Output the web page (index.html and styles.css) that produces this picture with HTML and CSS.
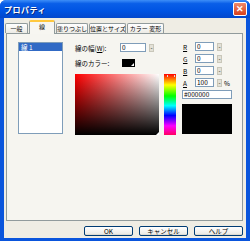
FILE: index.html
```html
<!DOCTYPE html>
<html lang="ja">
<head>
    <meta charset="UTF-8">
    <title>プロパティ</title>
    <link rel="stylesheet" href="styles.css">
</head>
<body>

<div class="window">
    <div class="titlebar">
        <span class="title">プロパティ</span>
        <span class="close">✕</span>
    </div>

    <div class="client">
        <div class="tabs">
            <div class="tab t1">一般</div>
            <div class="tab t2 active">線</div>
            <div class="tab t3">塗りつぶし</div>
            <div class="tab t4">位置とサイズ</div>
            <div class="tab t5">カラー 変形</div>
        </div>

        <div class="panel">
            <div class="list">
                <div class="item selected">線 1</div>
            </div>

            <div class="mid">
                <div class="row first">
                    <span class="label">線の幅(<u>W</u>):</span>
                    <span class="field wide">0</span>
                    <span class="spin">-</span>
                </div>
                <div class="row second">
                    <span class="label">線のカラー:</span>
                    <span class="swatch"><span class="arrow"></span></span>
                </div>
                <div class="picker">
                    <div class="sv"><span class="corner"></span></div>
                    <div class="hue"><span class="marker"></span></div>
                </div>
            </div>

            <div class="right">
                <div class="chan"><span class="key"><u>R</u></span><span class="field">0</span><span class="spin">-</span></div>
                <div class="chan"><span class="key"><u>G</u></span><span class="field">0</span><span class="spin">-</span></div>
                <div class="chan"><span class="key"><u>B</u></span><span class="field">0</span><span class="spin">-</span></div>
                <div class="chan"><span class="key"><u>A</u></span><span class="field">100</span><span class="spin">-</span><span class="pct">%</span></div>
                <div class="hex">#000000</div>
                <div class="preview"></div>
            </div>
        </div>

        <div class="buttons">
            <button>OK</button>
            <button>キャンセル</button>
            <button>ヘルプ</button>
        </div>
    </div>
</div>

</body>
</html>
```

FILE: styles.css
```css
body {
    margin: 0;
    font-family: "Noto Sans CJK JP", "Liberation Sans", sans-serif;
    font-size: 6.5px;
    color: #000;
    background: #fff;
}

.window {
    width: 250px;
    height: 241px;
    background: #0a55dc;
    border-radius: 6px 6px 0 0;
    display: flex;
    flex-direction: column;
    overflow: hidden;
}

.titlebar {
    height: 18px;
    flex: none;
    display: flex;
    align-items: center;
    justify-content: space-between;
    padding: 0 3px 0 4px;
    background: linear-gradient(to bottom, #3d8ef8 0%, #0a5fe8 20%, #0054e3 60%, #0348cc 100%);
}

.title {
    color: #fff;
    font-weight: bold;
    font-size: 8px;
    letter-spacing: 0.5px;
    text-shadow: 1px 1px 0 #0a2a80;
}

.close {
    width: 14px;
    height: 14px;
    box-sizing: border-box;
    border: 1px solid #fff;
    border-radius: 2px;
    background: linear-gradient(to bottom, #f08a6a, #d9401c);
    color: #fff;
    font-size: 9px;
    font-weight: bold;
    line-height: 12px;
    text-align: center;
}

.client {
    flex: 1;
    margin: 0 4px 3px 4px;
    padding: 0 3px 0 2px;
    background: #efede4;
    display: flex;
    flex-direction: column;
}

.tabs {
    height: 14px;
    margin-top: 1px;
    margin-left: -1px;
    display: flex;
    align-items: flex-end;
    position: relative;
    z-index: 1;
}

.tab {
    box-sizing: border-box;
    height: 10px;
    margin-right: 1px;
    border: 1px solid #919b9c;
    border-bottom: none;
    border-radius: 2px 2px 0 0;
    background: linear-gradient(to bottom, #fff, #ecebe5);
    font-size: 6px;
    line-height: 9px;
    text-align: center;
    white-space: nowrap;
    overflow: hidden;
}

.t1 { width: 23px; }
.t2 { width: 26px; }
.t3 { width: 32px; }
.t4 { width: 37px; }
.t5 { width: 37px; }

.tab.active {
    height: 14px;
    margin-bottom: -1px;
    background: #f7f6f1;
    border-top: 2px solid #ffc83c;
    line-height: 10px;
}

.panel {
    box-sizing: border-box;
    height: 188px;
    border: 1px solid #919b9c;
    background: #f6f5f0;
    display: flex;
    align-items: flex-start;
    padding: 8px 0 0 11px;
}

.list {
    width: 43px;
    height: 90px;
    border: 1px solid #7f9db9;
    background: #fff;
}

.item {
    height: 8px;
    line-height: 8px;
    padding-left: 2px;
}

.item.selected {
    background: #316ac5;
    color: #fff;
}

.mid {
    margin-left: 12px;
    width: 101px;
    display: flex;
    flex-direction: column;
}

.row {
    display: flex;
    align-items: center;
    height: 9px;
}

.row.first {
    margin-top: 1px;
}

.row.second {
    margin-top: 6px;
}

.label {
    width: 45px;
}

.field {
    height: 9px;
    box-sizing: border-box;
    border: 1px solid #7f9db9;
    background: #fff;
    line-height: 7px;
    padding-left: 1px;
    width: 19px;
}

.field.wide {
    width: 26px;
}

.spin {
    width: 5px;
    height: 8px;
    margin-left: 3px;
    background: #e3e1d7;
    border: 1px solid #c9c7ba;
    box-sizing: border-box;
    font-size: 6px;
    line-height: 5px;
    text-align: center;
}

.swatch {
    width: 13px;
    height: 8px;
    margin-left: 2px;
    background: #000;
    position: relative;
}

.arrow {
    position: absolute;
    right: 1px;
    bottom: 1px;
    width: 0;
    height: 0;
    border-left: 3px solid transparent;
    border-bottom: 3px solid #fff;
}

.picker {
    margin-top: 7px;
    display: flex;
    gap: 5px;
}

.sv {
    width: 84px;
    height: 61px;
    background:
        linear-gradient(to bottom, rgba(0,0,0,0), #000),
        linear-gradient(to right, #ff0000, #ffffff);
    position: relative;
}

.corner {
    position: absolute;
    right: 0;
    bottom: 0;
    width: 0;
    height: 0;
    border-left: 3px solid transparent;
    border-bottom: 3px solid #fff;
}

.hue {
    width: 12px;
    height: 61px;
    background: linear-gradient(to bottom, #ff0000, #ffff00 18%, #00ff00 36%, #00ffff 52%, #0000ff 68%, #ff00ff 85%, #ff0060);
    position: relative;
}

.marker {
    position: absolute;
    left: 3px;
    top: 1px;
    width: 6px;
    height: 2px;
    border-left: 1px solid #ddd;
    border-right: 1px solid #ddd;
}

.right {
    margin-left: 6px;
    width: 50px;
    display: flex;
    flex-direction: column;
    gap: 3px;
}

.chan {
    display: flex;
    align-items: center;
    height: 9px;
}

.key {
    width: 12px;
    padding-left: 1px;
}

.pct {
    margin-left: 2px;
}

.hex {
    height: 9px;
    box-sizing: border-box;
    border: 1px solid #7f9db9;
    background: #fff;
    line-height: 7px;
    padding-left: 1px;
}

.preview {
    margin-top: 2px;
    height: 30px;
    background: #000;
}

.buttons {
    display: flex;
    justify-content: flex-end;
    gap: 6px;
    margin-top: 5px;
}

button {
    width: 49px;
    height: 10px;
    padding: 0;
    font-family: inherit;
    font-size: 6.5px;
    line-height: 8px;
    border: 1px solid #003c74;
    border-radius: 2px;
    background: linear-gradient(to bottom, #ffffff, #ecebe6 85%, #d6d0c5);
    color: #000;
}
```
